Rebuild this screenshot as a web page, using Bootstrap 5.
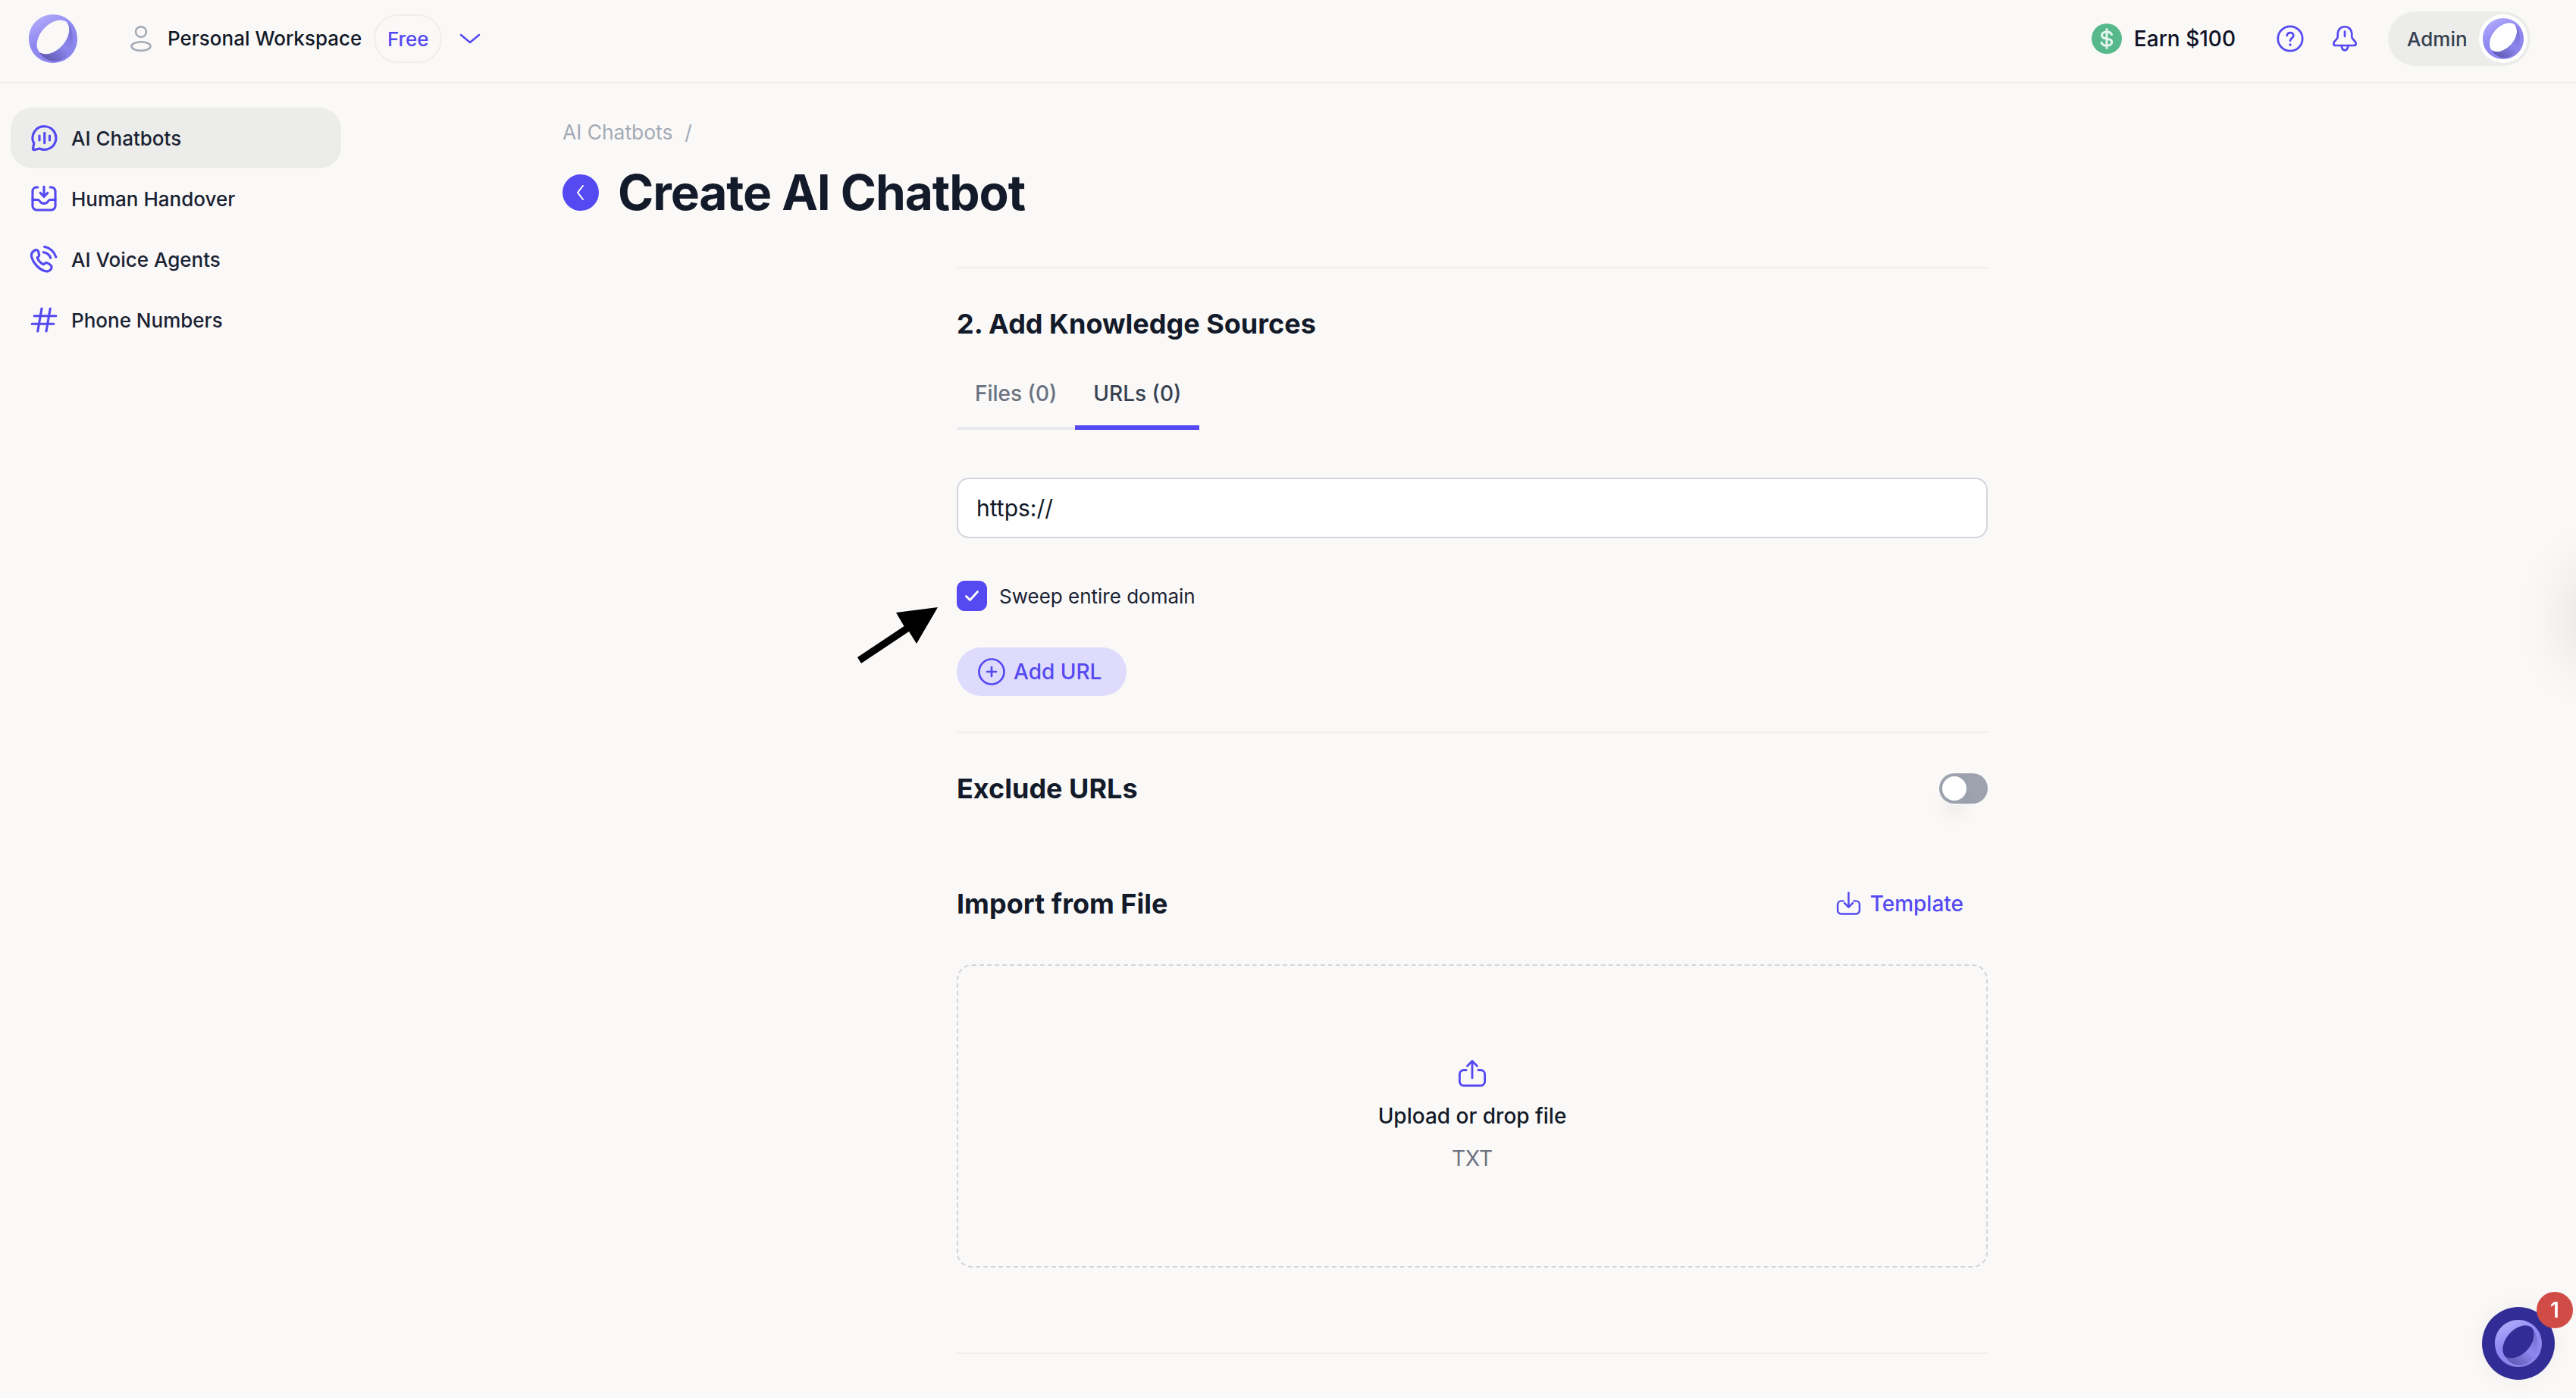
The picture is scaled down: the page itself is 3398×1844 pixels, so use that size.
<!DOCTYPE html>
<html lang="en">
<head>
<meta charset="utf-8">
<title>Create AI Chatbot</title>
<link rel="stylesheet" href="https://cdn.jsdelivr.net/npm/bootstrap@5.3.0/dist/css/bootstrap.min.css">
<style>
:root{--ink:#111827;--brand:#5549f2;--line:#efeeec;--page:#faf9f7}
html,body{height:100%}
body{background:var(--page);color:var(--ink);font-family:Inter,"Liberation Sans",sans-serif;font-size:28px;overflow:hidden}
.ico{fill:none;stroke:var(--brand);stroke-width:1.8;stroke-linecap:round;stroke-linejoin:round;flex:none}
.defs-holder{display:block;width:0;height:0}
.topbar{height:110px;padding:0 60px 6px 38px;border-bottom:2px solid var(--line);flex-wrap:nowrap}
.brand-logo{width:64px;height:64px;flex:none}
.ws-person{width:28px;height:34px;margin-left:70px;fill:none;stroke:#a3aab5;stroke-width:2.5}
.ws-name{margin-left:21px;font-weight:500;font-size:26px;line-height:34px}
.plan-pill{margin-left:16px;width:90px;height:64px;border:2px solid var(--line);border-radius:32px;color:var(--brand);font-size:26px;font-weight:500}
.ws-chevron{width:28px;height:14px;margin-left:23px;fill:none;stroke:var(--brand);stroke-width:2.5;stroke-linecap:round;stroke-linejoin:round}
.earn-text{margin-left:16px;margin-right:54px;font-size:28px;font-weight:500;color:#0f1226}
.admin-pill{margin-left:39px;width:188px;height:72px;background:#ecedea;border-radius:36px;padding:0 4px 0 25px;color:#374151;font-size:26px;font-weight:500}
.admin-avatar{width:64px;height:64px;background:#fff;border-radius:50%;padding:5px}
.admin-avatar svg{width:54px;height:54px;display:block}
.side-rail{width:450px;padding:32px 0 0 14px;flex:none}
.list-group-flush>.side-link.side-link{height:80px;padding:0 0 0 26px;gap:18px;border-radius:28px;border:0;background:transparent;color:#1a2233;font-size:26px;font-weight:500}
.side-link .ico{stroke-width:2.1}
.list-group-flush>.side-link.active{background:#ecedea;color:#1a2233}
.page-main{padding-left:292px;flex:1;min-width:0}
.crumb-bar{margin:0;padding-top:48px;height:78px;font-size:26.4px;line-height:32px;--bs-breadcrumb-divider-color:#a3aab5;--bs-breadcrumb-item-active-color:#a3aab5;--bs-breadcrumb-margin-bottom:0;--bs-breadcrumb-item-padding-x:16px}
.crumb-bar .breadcrumb-item+.breadcrumb-item::before{color:#a3aab5}
.back-dot{width:48px;height:48px;background:var(--brand);border-radius:50%;border:0;padding:0}
.back-dot svg{width:24px;height:24px;fill:none;stroke:#fff;stroke-width:2;stroke-linecap:round;stroke-linejoin:round}
.page-title{font-size:64px;font-weight:700;line-height:80px;margin:0 0 0 25px;color:#131a29;letter-spacing:-1.1px}
.head-row{margin-top:26px;height:80px}
.form-col{width:1360px;margin-left:520px}
.rule{height:2px;background:var(--line);border:0;margin:0;opacity:1}
.sec-title{font-size:36px;font-weight:700;line-height:44px;margin:0;color:#131a29}
.tab-strip{margin-top:44px;width:320px;border-bottom:4px solid #e9e9ee;flex-wrap:nowrap;--bs-nav-link-padding-x:24px;--bs-nav-link-padding-y:0}
.tab-strip .nav-link{height:74px;line-height:52px;margin-bottom:-4px;border:0;background:none;font-size:28px;font-weight:500;color:#6b7280;border-bottom:6px solid transparent;border-radius:0;white-space:nowrap}
.tab-strip .nav-link.active{color:#374151;border-bottom-color:var(--brand);background:none}
.url-field{margin-top:63px;height:80px;border:2px solid #d3d5dd;border-radius:16px;padding:0 24px;font-size:30px;color:var(--ink);font-family:inherit}
.sweep-row{margin:0;padding:0;min-height:40px;gap:16px}
.sweep-row .form-check-input{width:40px;height:40px;margin:0;border-radius:10px;background-color:var(--brand);border-color:var(--brand);float:none;background-size:40px;flex:none;background-image:url("data:image/svg+xml,%3csvg xmlns='http://www.w3.org/2000/svg' viewBox='0 0 40 40'%3e%3cpath d='M12.500 20.500l5 5 10-11' fill='none' stroke='%23fff' stroke-width='2.800' stroke-linecap='round' stroke-linejoin='round'/%3e%3c/svg%3e")}
.sweep-row .form-check-label{font-size:26px;color:#1a2233}
.add-btn{margin-top:48px;height:64px;width:224px;border-radius:32px;background:#dedbfc;border:0;color:var(--brand);font-size:28px;font-weight:500;padding:0 0 0 28px;gap:11px}
.add-btn:hover{background:#dedbfc;color:var(--brand)}
.arrow-anchor{position:relative;margin-top:56px}
.pointer-arrow{position:absolute;left:-132px;top:34px;width:112px;height:80px;fill:#000}
.sec-row{height:80px}
.toggle-box{margin:0;padding:0;min-height:0;height:40px;position:relative}
.toggle-box::after{content:"";position:absolute;left:4px;top:10px;width:32px;height:32px;border-radius:50%;box-shadow:0 16px 22px rgba(0,0,0,.05);pointer-events:none}
.toggle-box .form-check-input{width:64px;height:40px;margin:0;float:none;border:0;border-radius:20px;background-color:#9ca3af;background-image:url("data:image/svg+xml,%3csvg xmlns='http://www.w3.org/2000/svg' viewBox='-5 -5 10 10'%3e%3ccircle r='4' fill='%23fff'/%3e%3c/svg%3e");background-position:left center}
.tmpl-link{color:var(--brand);font-size:28px;font-weight:500;padding-right:32px;gap:12px;text-decoration:none}
.drop-area{height:400px;border:2px dashed #d3d5dd;border-radius:20px;margin-top:40px;padding-top:124px}
.drop-title{font-size:28px;font-weight:500;line-height:36px;margin-top:18px;color:#131a29}
.drop-sub{font-size:28px;line-height:36px;margin-top:20px;color:#6b7280}
.chat-bubble{position:fixed;right:28px;bottom:24px;width:96px;height:96px;background:#322d96;border-radius:50%;border:0;padding:0;box-shadow:0 0 30px rgba(0,0,0,.05)}
.chat-bubble>svg{width:62px;height:62px}
.chat-count{position:absolute;top:-20px;right:-24px;width:48px;height:48px;background:#d14b47;color:#fff;border-radius:50%;font-size:28px;font-weight:600;--bs-badge-padding-x:0;--bs-badge-padding-y:0}
.edge-glow{position:fixed;right:-60px;top:760px;width:60px;height:110px;border-radius:50%;box-shadow:0 0 70px 20px rgba(0,0,0,.08)}
</style>
</head>
<body>
<svg class="defs-holder" aria-hidden="true">
  <defs>
    <linearGradient id="ringFace" x1="0.2" y1="0" x2="0.75" y2="1">
      <stop offset="0" stop-color="#b4aefb"/>
      <stop offset=".45" stop-color="#8f88f2"/>
      <stop offset="1" stop-color="#8b84ea"/>
    </linearGradient>
    <linearGradient id="ringWall" x1="0.9" y1="0" x2="0.2" y2="1">
      <stop offset="0" stop-color="#6f68c9"/>
      <stop offset=".5" stop-color="#8d86ee"/>
      <stop offset="1" stop-color="#5d56b0"/>
    </linearGradient>
    <symbol id="ring" viewBox="0 0 64 64">
      <path fill="url(#ringFace)" fill-rule="evenodd" d="M32 0C50 0 64 14 64 32S50 64 32 64 0 50 0 32 14 0 32 0ZM50 10A27 18 -48 0 0 14 50 27 18 -48 0 0 50 10Z"/>
      <path fill="url(#ringWall)" d="M50 10A27 18 -48 0 1 14 50C20 60 34 66 46 58 60 48 62 22 50 10Z"/>
    </symbol>
  </defs>
</svg>

<nav class="navbar topbar d-flex align-items-center">
  <div class="d-flex align-items-center">
    <svg class="brand-logo"><use href="#ring"/></svg>
    <svg class="ws-person" viewBox="0 0 28 34"><ellipse cx="14" cy="8" rx="7" ry="6.8"/><ellipse cx="14" cy="27" rx="12.5" ry="5.8"/></svg>
    <span class="ws-name">Personal Workspace</span>
    <span class="plan-pill d-flex align-items-center justify-content-center">Free</span>
    <svg class="ws-chevron" viewBox="0 0 28 14"><path d="M2 2 14 12 26 2"/></svg>
  </div>
  <div class="d-flex align-items-center">
    <svg width="40" height="40" viewBox="0 0 40 40"><circle cx="20" cy="20" r="20" fill="#56b88b"/><path d="M26.5 14.5C25.5 12 23 11 20 11c-3.600 0-6.500 1.800-6.500 4.700 0 6.300 13.300 2.500 13.300 8.800 0 3-3 4.700-6.800 4.700-3.300 0-5.900-1.300-7-4M20 7.500v25" fill="none" stroke="#e6f6ef" stroke-width="3" stroke-linecap="round"/></svg>
    <span class="earn-text">Earn $100</span>
    <svg class="ico" width="36" height="36" viewBox="0 0 24 24"><circle cx="12" cy="12" r="10.800"/><path d="M9.200 9.300c.2-1.700 1.400-2.600 2.900-2.600s2.800 1 2.800 2.500c0 2.300-2.900 2.400-2.900 4.600"/><path d="M12 17.300v.1" stroke-width="2.200"/></svg>
    <svg class="ico" width="36" height="36" viewBox="0 0 24 24" style="margin-left:36px"><path d="M12 1.500c-3.800 0-6.200 2.800-6.200 6v3c0 2-3.600 3.400-3.600 5.800 0 1 .9 1.700 1.900 1.700h15.800c1 0 1.900-.7 1.900-1.700 0-2.400-3.600-3.800-3.600-5.800v-3c0-3.200-2.400-6-6.200-6z"/><path d="M12 5.800v4.200"/><path d="M9 18c.4 2.600 1.500 4.200 3 4.200s2.600-1.600 3-4.200"/></svg>
    <div class="admin-pill d-flex align-items-center justify-content-between">
      <span>Admin</span>
      <span class="admin-avatar d-block"><svg><use href="#ring"/></svg></span>
    </div>
  </div>
</nav>

<div class="d-flex">
  <aside class="side-rail">
    <div class="list-group list-group-flush">
      <a href="#" class="list-group-item list-group-item-action side-link active d-flex align-items-center">
        <svg class="ico" width="36" height="36" viewBox="0 0 24 24"><path d="M12.500 1.800a10.200 10.200 0 1 1-4.300 19.500l-4.900 1.100c-.6.100-1.100-.4-1-1l.9-4.600A10.200 10.200 0 0 1 12.500 1.800z"/><path d="M12.500 7.500v9"/><path d="M8 10v4"/><path d="M17 10v4"/></svg>
        AI Chatbots
      </a>
      <a href="#" class="list-group-item list-group-item-action side-link d-flex align-items-center">
        <svg class="ico" width="36" height="36" viewBox="0 0 24 24"><path d="M6.500 2H5.500a3.500 3.500 0 0 0-3.500 3.500v13A3.500 3.500 0 0 0 5.500 22h13a3.500 3.500 0 0 0 3.500-3.500v-13A3.500 3.500 0 0 0 18.500 2h-1"/><path d="M2 13h4.500c1 0 1.500.6 2 1.500.6 1 1.800 1.800 3.500 1.800s2.900-.8 3.500-1.800c.5-.9 1-1.500 2-1.500H22"/><path d="M12 1.500v8.500"/><path d="M8.800 7 12 10.200 15.200 7"/></svg>
        Human Handover
      </a>
      <a href="#" class="list-group-item list-group-item-action side-link d-flex align-items-center">
        <svg class="ico" width="36" height="36" viewBox="0 0 24 24"><path d="M4.200 4C1.500 5.300.5 7.500 1.200 10.200c1.400 5 6 10.300 11 12 2.700.9 5.500 0 6.300-2.100.5-1.400 0-2.600-1.200-3.400l-1.800-1.200c-1.100-.7-2.200-.6-3 .3l-.8.8c-2.500-1.100-4.600-3.500-5.600-6l.9-.8c.9-.8 1-1.900.4-3L7.100 5C6.400 3.900 5.300 3.500 4.200 4z"/><path d="M12.500 1c4.700.8 8.700 4.400 10 9"/><path d="M11.500 5.800c3 .5 5.500 2.500 6.300 5"/></svg>
        AI Voice Agents
      </a>
      <a href="#" class="list-group-item list-group-item-action side-link d-flex align-items-center">
        <svg class="ico" width="36" height="36" viewBox="0 0 24 24"><path d="M3.500 8.500h19"/><path d="M1.500 15.500h19"/><path d="M10 2 6.500 22"/><path d="M17.500 2 14 22"/></svg>
        Phone Numbers
      </a>
    </div>
  </aside>

  <main class="page-main">
    <ol class="breadcrumb crumb-bar">
      <li class="breadcrumb-item active">AI Chatbots</li>
      <li class="breadcrumb-item active"></li>
    </ol>
    <div class="head-row d-flex align-items-center">
      <button class="back-dot d-flex align-items-center justify-content-center" aria-label="Back"><svg viewBox="0 0 24 24"><path d="M15 3 8 12l7 9"/></svg></button>
      <h1 class="page-title">Create AI Chatbot</h1>
    </div>
    <div class="form-col">
      <hr class="rule" style="margin-top:58px">
      <h2 class="sec-title" style="margin-top:51px">2. Add Knowledge Sources</h2>
      <ul class="nav nav-tabs tab-strip">
        <li class="nav-item"><a class="nav-link" href="#">Files (0)</a></li>
        <li class="nav-item"><a class="nav-link active" href="#">URLs (0)</a></li>
      </ul>
      <input class="form-control url-field" type="text" value="https://">
      <div class="arrow-anchor">
        <svg class="pointer-arrow" viewBox="0 0 112 80"><path d="M107 1 52 8 62.500 26 1 67 6 75 69 33 79 49Z"/></svg>
        <div class="form-check sweep-row d-flex align-items-center">
          <input class="form-check-input" type="checkbox" id="sweep" checked>
          <label class="form-check-label" for="sweep">Sweep entire domain</label>
        </div>
      </div>
      <button class="btn add-btn d-flex align-items-center">
        <svg class="ico" width="36" height="36" viewBox="0 0 24 24"><circle cx="12" cy="12" r="11"/><path d="M12 8v8M8 12h8"/></svg>
        Add URL
      </button>
      <hr class="rule" style="margin-top:47px">
      <div class="sec-row d-flex align-items-center justify-content-between" style="margin-top:33px">
        <h2 class="sec-title">Exclude URLs</h2>
        <div class="form-check form-switch toggle-box"><input class="form-check-input d-block" type="checkbox" role="switch" aria-label="Exclude URLs"></div>
      </div>
      <div class="sec-row d-flex align-items-center justify-content-between" style="margin-top:72px">
        <h2 class="sec-title">Import from File</h2>
        <a class="tmpl-link d-flex align-items-center" href="#">
          <svg class="ico" width="33" height="33" viewBox="0 0 24 24"><path d="M7 9H5a3.500 3.500 0 0 0-3.500 3.500V18A3.500 3.500 0 0 0 5 21.500h14a3.500 3.500 0 0 0 3.500-3.500v-5.500A3.500 3.500 0 0 0 19 9h-2"/><path d="M12 1v13.500"/><path d="M8 11l4 4 4-4"/></svg>
          Template
        </a>
      </div>
      <div class="drop-area text-center">
        <svg class="ico d-block mx-auto" width="38" height="38" viewBox="0 0 24 24"><path d="M7 8.500H5A3.500 3.500 0 0 0 1.500 12v6A3.500 3.500 0 0 0 5 21.500h14a3.500 3.500 0 0 0 3.500-3.500v-6A3.500 3.500 0 0 0 19 8.500h-2"/><path d="M12 15V1.500"/><path d="M8 5l4-4 4 4"/></svg>
        <div class="drop-title">Upload or drop file</div>
        <div class="drop-sub">TXT</div>
      </div>
      <hr class="rule" style="margin-top:112px">
    </div>
  </main>
</div>

<div class="edge-glow"></div>
<button class="chat-bubble d-flex align-items-center justify-content-center" aria-label="Open chat">
  <svg><use href="#ring"/></svg>
  <span class="badge chat-count d-flex align-items-center justify-content-center">1</span>
</button>
<script src="https://cdn.jsdelivr.net/npm/bootstrap@5.3.0/dist/js/bootstrap.bundle.min.js"></script>
</body>
</html>
